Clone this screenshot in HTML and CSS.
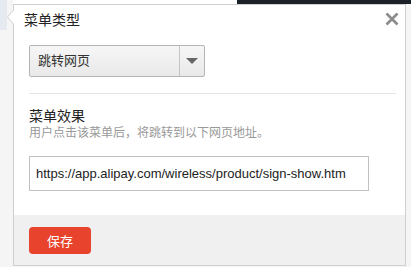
FILE: index.html
```html
<!DOCTYPE html>
<html lang="zh-CN">
<head>
  <meta charset="UTF-8">
  <meta name="viewport" content="width=device-width, initial-scale=1.0">
  <title>菜单类型</title>
  <link rel="stylesheet" href="styles.css">
</head>
<body>
  <div class="dialog">
    <div class="dialog-header">
      <h2>菜单类型</h2>
      <button class="close-btn" aria-label="关闭">
        <svg width="14" height="14" viewBox="0 0 14 14">
          <path d="M1.5 1.5 L12.5 12.5 M12.5 1.5 L1.5 12.5" stroke="#8a8a8a" stroke-width="2.6" fill="none"/>
        </svg>
      </button>
    </div>

    <div class="dialog-body">
      <div class="select">
        <span class="select-value">跳转网页</span>
        <span class="select-arrow"></span>
      </div>

      <hr class="divider">

      <h3>菜单效果</h3>
      <p class="hint">用户点击该菜单后，将跳转到以下网页地址。</p>
      <input type="text" class="url-input" value="https://app.alipay.com/wireless/product/sign-show.htm">
    </div>

    <div class="dialog-footer">
      <button class="save-btn">保存</button>
    </div>
  </div>
</body>
</html>
```

FILE: styles.css
```css
body {
  margin: 0;
  padding: 4px 5px 0 13px;
  font-family: "Liberation Sans", "Noto Sans CJK SC", sans-serif;
  color: #333;
  background:
    linear-gradient(#1c2029, #1c2029) right top / 174px 4px no-repeat,
    linear-gradient(#fff, #fff) 13px top / 224px 4px no-repeat,
    linear-gradient(#e5eaf1, #e5eaf1) left top / 7px 30px no-repeat,
    #f5f5f5;
}
.dialog {
  position: relative;
  background-color: #fff;
  border: 1px solid #cfcfcf;
}
.dialog::before,
.dialog::after {
  content: "";
  position: absolute;
  top: 5px;
  width: 0;
  height: 0;
  border-style: solid;
  border-width: 7px 6px 7px 0;
}
.dialog::before {
  left: -7px;
  border-color: transparent #cfcfcf transparent transparent;
}
.dialog::after {
  left: -6px;
  border-color: transparent #fff transparent transparent;
}
.dialog-header {
  display: flex;
  justify-content: space-between;
  align-items: flex-start;
  padding: 3px 6px 0 10px;
}
.dialog-header h2 {
  margin: 0;
  font-size: 14px;
  font-weight: normal;
  line-height: 24px;
  color: #222;
}
.close-btn {
  display: block;
  margin-top: 4px;
  padding: 0;
  border: none;
  background: none;
  cursor: pointer;
  line-height: 0;
}
.dialog-body {
  padding: 13px 9px 24px 15px;
}
.select {
  display: flex;
  width: 176px;
  height: 32px;
  box-sizing: border-box;
  border: 1px solid #b4b4b4;
  border-radius: 2px;
  background: linear-gradient(#f6f6f6, #e9e9e9);
}
.select-value {
  flex: 1;
  padding-left: 8px;
  font-size: 13px;
  line-height: 30px;
  color: #333;
}
.select-arrow {
  position: relative;
  width: 24px;
  border-left: 1px solid #c4c4c4;
}
.select-arrow::after {
  content: "";
  position: absolute;
  left: 6px;
  top: 12px;
  border-style: solid;
  border-width: 6px 6px 0 6px;
  border-color: #666 transparent transparent transparent;
}
.divider {
  margin: 16px 0 0;
  border: none;
  border-top: 1px solid #e5e5e5;
}
h3 {
  margin: 13px 0 0;
  font-size: 14px;
  font-weight: normal;
  line-height: 18px;
  color: #222;
}
.hint {
  margin: 1px 0 0;
  font-size: 12px;
  line-height: 15px;
  color: #999;
}
.url-input {
  display: block;
  margin-top: 15px;
  width: 340px;
  height: 35px;
  box-sizing: border-box;
  padding: 0 6px;
  border: 1px solid #c2c2c2;
  font-family: inherit;
  font-size: 13px;
  color: #222;
  outline: none;
}
.dialog-footer {
  padding: 12px 15px 11px;
  background-color: #f0f0f0;
}
.save-btn {
  display: block;
  width: 62px;
  height: 27px;
  border: none;
  border-radius: 4px;
  background-color: #e8432c;
  color: #fff;
  font-family: inherit;
  font-size: 13px;
  cursor: pointer;
}
```
